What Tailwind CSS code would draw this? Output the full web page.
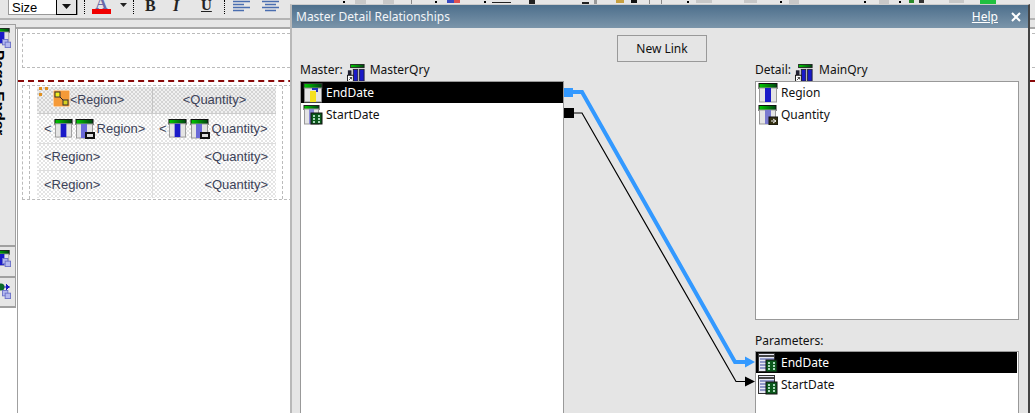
<!DOCTYPE html>
<html lang="en">
<head>
<meta charset="UTF-8">
<title>Master Detail Relationships</title>
<script src="https://cdn.jsdelivr.net/npm/@tailwindcss/browser@4"></script>
</head>
<body class="bg-white">
<!-- shared icons -->
<svg width="0" height="0" class="absolute">
  <defs>
    <linearGradient id="grn" x1="0" y1="0" x2="1" y2="0"><stop offset="0" stop-color="#0c0"/><stop offset="1" stop-color="#041"/></linearGradient>
    <symbol id="field" viewBox="0 0 20 20">
      <rect x="1" y="0.5" width="18" height="5" fill="url(#grn)" stroke="#111"/>
      <rect x="1.5" y="5" width="17" height="14" fill="#e4e4e4" stroke="#999"/>
      <rect x="7" y="5" width="6" height="14" fill="#1a1ac8"/>
    </symbol>
    <symbol id="fieldEnd" viewBox="0 0 20 20">
      <rect x="1" y="0.5" width="18" height="5" fill="url(#grn)" stroke="#333"/>
      <rect x="1.5" y="5" width="17" height="14" fill="#e4e4e4" stroke="#888"/>
      <rect x="7" y="8" width="6" height="11" fill="#f4e020"/>
      <path d="M9 6h5v3" fill="none" stroke="#2233bb" stroke-width="2"/>
    </symbol>
    <symbol id="fieldDate" viewBox="0 0 20 20">
      <rect x="1" y="0.5" width="15" height="4" fill="url(#grn)" stroke="#222"/>
      <rect x="1.5" y="4" width="14" height="15" fill="#e4e4e4" stroke="#999"/>
      <rect x="6" y="4" width="5" height="15" fill="#8a8ad8"/>
      <rect x="8" y="8" width="11" height="11" fill="#0b5a1c" stroke="#111"/>
      <path d="M10 11h2M15 11h2M10 14h2M15 14h2M10 17h2M15 17h2" stroke="#dfe" stroke-width="1.5"/>
    </symbol>
    <symbol id="fieldMeasure" viewBox="0 0 20 20">
      <rect x="1" y="0.5" width="17" height="5" fill="url(#grn)" stroke="#111"/>
      <rect x="1.5" y="5" width="16" height="14" fill="#e4e4e4" stroke="#999"/>
      <rect x="7" y="5" width="6" height="14" fill="#7a7ad0"/>
      <rect x="11" y="12" width="9" height="8" fill="#332f10" stroke="#111"/>
      <path d="M13 16h5M15 14l3 2-3 2" fill="none" stroke="#eee"/>
    </symbol>
    <symbol id="fieldBox" viewBox="0 0 20 20">
      <rect x="1" y="0.5" width="17" height="5" fill="url(#grn)" stroke="#111"/>
      <rect x="1.5" y="5" width="16" height="14" fill="#e4e4e4" stroke="#999"/>
      <rect x="6" y="5" width="6" height="14" fill="#6a6ad8"/>
      <rect x="10" y="13" width="10" height="7" fill="#111"/>
      <rect x="12" y="15" width="6" height="3" fill="#ddd"/>
    </symbol>
    <symbol id="query" viewBox="0 0 20 20">
      <rect x="4" y="0.5" width="15" height="3.5" fill="url(#grn)" stroke="#222"/>
      <rect x="1" y="7" width="4" height="12" fill="#223"/>
      <rect x="7" y="6" width="5" height="13" fill="#1a1ac8" stroke="#223"/>
      <rect x="14" y="6" width="5" height="13" fill="#1a1ac8" stroke="#223"/>
      <rect x="0.5" y="12.5" width="6.5" height="7" fill="#fff" stroke="#111"/>
      <path d="M2 18l3-3M3 15h2v2" fill="none" stroke="#111" stroke-width=".8"/>
    </symbol>
    <symbol id="param" viewBox="0 0 20 20">
      <rect x="0.5" y="0.5" width="16" height="18" fill="#e8e8f4" stroke="#333"/>
      <path d="M1 3h15" stroke="#444" stroke-width="2"/>
      <path d="M2 6h14M2 9h14M2 12h14M2 15h14" stroke="#3a4aa0"/>
      <rect x="8" y="7" width="11" height="12" fill="#0b5a1c" stroke="#111"/>
      <path d="M10 10h2M15 10h2M10 13h2M15 13h2M10 16h2M15 16h2" stroke="#dfe" stroke-width="1.5"/>
    </symbol>
    <symbol id="dbs" viewBox="0 0 10 10">
      <rect x="0.5" y="0.5" width="6" height="6" fill="#b4b8ee" stroke="#6a70c8"/>
      <rect x="3.5" y="3.5" width="6" height="6" fill="#b4b8ee" stroke="#6a70c8"/>
    </symbol>
  </defs>
</svg>

<div class="relative w-[1035px] h-[413px] overflow-hidden flex flex-col bg-white font-['Liberation_Sans',sans-serif]">

  <!-- report designer toolbar -->
  <div class="h-[29px] shrink-0 bg-[#e6e6e6] border-b-2 border-[#a8a8a8] relative">
    <div class="flex items-start h-[20px] border-b-2 border-[#b4b4b4]">
      <div class="ml-[8px] w-[70px] h-[16px] -mt-px bg-white border border-[#999] flex items-center justify-between pl-[3px]">
        <span class="text-[13px] leading-none text-black">Size</span>
        <span class="w-[21px] h-[16px] bg-[#e4e4e4] border border-black border-t-0 flex items-center justify-center">
          <svg width="9" height="5"><path d="M0 0h9L4.500 5z" fill="#111"/></svg>
        </span>
      </div>
      <span class="ml-[6px] w-px h-[14px] border-l border-dotted border-black"></span>
      <div class="ml-[7px] w-[19px] flex flex-col items-center">
        <span class="text-[17px] leading-[10px] -mt-[1px] font-bold font-['Liberation_Serif',serif] text-[#6a6aa8]">A</span>
        <span class="w-[19px] h-[5px] mt-[0px] bg-[#f00000]"></span>
      </div>
      <svg class="ml-[9px] mt-[3px]" width="7" height="4"><path d="M0 0h7L3.500 4z" fill="#222"/></svg>
      <span class="ml-[6px] w-px h-[14px] border-l border-dotted border-black"></span>
      <span class="ml-[11px] w-[14px] text-[16px] leading-[11px] font-bold font-['Liberation_Serif',serif] text-[#222]">B</span>
      <span class="ml-[14px] w-[14px] text-[16px] leading-[11px] font-bold italic font-['Liberation_Serif',serif] text-[#222]">I</span>
      <span class="ml-[14px] w-[14px] text-[15px] leading-[11px] font-bold font-['Liberation_Serif',serif] underline text-[#222]">U</span>
      <span class="ml-[9px] w-px h-[14px] border-l border-dotted border-black"></span>
      <svg class="ml-[8px]" width="17" height="12"><path d="M0 1.500h17M0 4.500h11M0 7.500h17M0 10.500h11" stroke="#4a6eb0" stroke-width="1.500"/></svg>
      <svg class="ml-[12px]" width="17" height="12"><path d="M0 1.500h17M3 4.500h11M0 7.500h17M3 10.500h11" stroke="#4a6eb0" stroke-width="1.500"/></svg>
    </div>
    <!-- icons peeking out above the dialog -->
    <div class="absolute left-[343px] top-0 h-[4px] flex items-start">
      <span class="w-[2px] h-[2px] mt-[1px] bg-black"></span>
      <span class="ml-[10px] w-[11px] h-[4px] bg-[#c8c8c8]"></span>
      <span class="ml-[17px] w-[11px] h-[4px] bg-[#c8c8c8]"></span>
      <span class="ml-[17px] w-px h-[4px] bg-[#888]"></span>
      <span class="ml-[23px] w-[2px] h-[2px] mt-[1px] bg-black"></span>
      <span class="ml-[10px] w-[7px] h-[3px] bg-[#3a4ac0]"></span>
      <span class="w-[6px] h-[3px] bg-[#e05050]"></span>
      <span class="ml-[24px] w-[2px] h-[2px] mt-[1px] bg-black"></span>
      <span class="ml-[6px] w-[19px] h-px mt-[2px] bg-[#222]"></span>
      <span class="ml-[18px] w-[6px] h-[4px] bg-[#222]"></span>
      <span class="ml-[47px] w-[7px] h-[2px] mt-[2px] bg-[#222]"></span>
      <span class="ml-[5px] w-[3px] h-[4px] bg-[#999]"></span>
      <span class="ml-[19px] w-[8px] h-[3px] bg-[#c8a040]"></span>
      <span class="ml-[7px] w-[6px] h-[3px] bg-[#111]"></span>
      <span class="ml-[12px] w-px h-[4px] bg-[#888]"></span>
      <span class="ml-[11px] w-px h-[4px] bg-[#888]"></span>
      <span class="ml-[25px] w-[2px] h-[2px] mt-[1px] bg-black"></span>
      <span class="ml-[7px] w-[16px] h-[3px] bg-[#c8c8c8]"></span>
      <span class="ml-[32px] w-[13px] h-[3px] bg-[#c8c8c8]"></span>
      <span class="ml-[23px] w-[2px] h-[2px] mt-[1px] bg-black"></span>
      <span class="ml-[7px] w-[10px] h-[4px] bg-[#c8c8c8]"></span>
      <span class="ml-[65px] w-[2px] h-[2px] mt-[1px] bg-black"></span>
      <span class="ml-[13px] w-[10px] h-[4px] bg-[#c8c8c8]"></span>
      <span class="ml-[10px] w-[2px] h-[2px] mt-[1px] bg-black"></span>
      <span class="ml-[8px] w-[5px] h-[3px] bg-[#2a8a2a]"></span>
      <span class="ml-[5px] w-[5px] h-[3px] bg-[#333]"></span>
      <span class="ml-[25px] w-[15px] h-[3px] bg-[#c8c8c8]"></span>
      <span class="ml-[16px] w-[16px] h-[4px] bg-[#20c040]"></span>
    </div>
  </div>

  <!-- designer surface -->
  <div class="flex-1 flex min-h-0">
    <div class="w-[16px] shrink-0 -mt-[5px] relative flex flex-col overflow-hidden">
      <div class="h-[221px] shrink-0 relative overflow-hidden bg-[#e6e6e6] border-t border-r border-[#a0a0a0]">
        <svg class="absolute left-[-6px] top-[3px]" width="16" height="16" viewBox="0 0 20 20"><use href="#field"/></svg>
        <svg class="absolute left-[2px] top-[14px]" width="9" height="9"><use href="#dbs"/></svg>
        <span class="absolute left-[-8px] top-[25px] [writing-mode:vertical-rl] text-[15.500px] leading-[14px] font-bold text-black">Page Ender</span>
      </div>
      <div class="h-[31px] shrink-0 bg-[#e6e6e6] border-t-2 border-r border-[#a0a0a0] relative overflow-hidden">
        <svg class="absolute left-[-6px] top-[3px]" width="16" height="16" viewBox="0 0 20 20"><use href="#field"/></svg>
        <svg class="absolute left-[2px] top-[11px]" width="9" height="9"><use href="#dbs"/></svg>
      </div>
      <div class="h-[32px] shrink-0 bg-[#e6e6e6] border-t-2 border-b-2 border-r border-[#a0a0a0] relative overflow-hidden">
        <svg class="absolute left-0 top-[3px]" width="10" height="12"><circle cx="1" cy="6" r="3.500" fill="#0a6a2a"/><path d="M4 6h6M6 3l3 3-3 3" fill="#1a1ac0" stroke="#1a1ac0"/></svg>
        <svg class="absolute left-[2px] top-[12px]" width="9" height="9"><use href="#dbs"/></svg>
      </div>
    </div>

    <div class="flex-1 flex flex-col ml-px border-l border-[#a0a0a0] pl-[4px] pt-[4px]">
      <div class="h-[35px] shrink-0 border border-dashed border-[#bbb] border-r-0"></div>
      <div class="h-[14px] shrink-0 border-b-2 border-dashed border-[#8a0a0a] -ml-[4px]"></div>
      <div class="mt-[3px] h-[115px] shrink-0 w-[270px] border border-dashed border-[#bbb] border-r-0 px-[6px]">
        <div class="w-[254px] h-full border-x border-dashed border-[#bbb] pl-[7px] pt-px">
          <div class="w-[239px] text-[13px] text-[#3c4258]">
            <div class="h-[27px] flex bg-[conic-gradient(#d4d4d4_25%,#f0f0f0_0_50%,#d4d4d4_0_75%,#f0f0f0_0)] bg-[length:4px_4px] border-b border-[#ccc]">
              <div class="w-[116px] border-r border-[#c4c4c4] flex items-center pl-[16px] relative text-[12.500px]">
                <span class="absolute left-[2px] top-[0px] grid grid-cols-2 gap-[3px]"><i class="w-[3px] h-[3px] bg-[#e09020]"></i><i class="w-[3px] h-[3px] bg-[#e09020]"></i><i class="w-[3px] h-[3px] bg-[#e09020]"></i></span>
                <svg width="17" height="17" class="shrink-0 mb-[4px]"><rect width="17" height="17" fill="#f59a38" stroke="#fff"/><path d="M4 4l9 9" stroke="#222"/><rect x="2" y="2" width="5" height="5" fill="#f2ee20" stroke="#333"/><rect x="10" y="10" width="5" height="5" fill="#d8d020" stroke="#333"/></svg>
                <span>&lt;Region&gt;</span>
              </div>
              <div class="flex-1 flex items-center justify-center">&lt;Quantity&gt;</div>
            </div>
            <div class="h-[30px] flex bg-[conic-gradient(#e4e4e4_25%,#ffffff_0_50%,#e4e4e4_0_75%,#ffffff_0)] bg-[length:4px_4px] border-b border-[#ddd]">
              <div class="w-[116px] border-r border-[#ddd] flex items-center pl-[7px]">
                <span>&lt;</span>
                <svg width="19" height="19" class="ml-[2px] shrink-0"><use href="#field"/></svg>
                <svg width="20" height="20" class="ml-[2px] shrink-0"><use href="#fieldBox"/></svg>
                <span class="ml-[2px]">Region&gt;</span>
              </div>
              <div class="flex-1 flex items-center pl-[6px]">
                <span>&lt;</span>
                <svg width="19" height="19" class="ml-[1px] shrink-0"><use href="#field"/></svg>
                <svg width="20" height="20" class="ml-[3px] shrink-0"><use href="#fieldBox"/></svg>
                <span class="ml-[2px]">Quantity&gt;</span>
              </div>
            </div>
            <div class="h-[27px] flex bg-[conic-gradient(#e4e4e4_25%,#ffffff_0_50%,#e4e4e4_0_75%,#ffffff_0)] bg-[length:4px_4px] border-b border-[#ddd]">
              <div class="w-[116px] border-r border-[#ddd] flex items-center pl-[7px]">&lt;Region&gt;</div>
              <div class="flex-1 flex items-center justify-end pr-[8px]">&lt;Quantity&gt;</div>
            </div>
            <div class="h-[27px] flex bg-[conic-gradient(#e4e4e4_25%,#ffffff_0_50%,#e4e4e4_0_75%,#ffffff_0)] bg-[length:4px_4px]">
              <div class="w-[116px] border-r border-[#ddd] flex items-center pl-[7px]">&lt;Region&gt;</div>
              <div class="flex-1 flex items-center justify-end pr-[8px]">&lt;Quantity&gt;</div>
            </div>
          </div>
        </div>
      </div>
    </div>
  </div>

  <!-- modal dialog -->
  <div class="absolute left-[290px] top-[4px] w-[740px] h-[409px] bg-[#e5e5e5] border-l-2 border-l-[#b8b8b8] border-r-2 border-r-[#444] border-t border-t-[#ccc] flex flex-col font-['Noto_Sans',sans-serif] text-[12px] text-[#111]">
    <div class="h-[23px] shrink-0 bg-gradient-to-b from-[#4d6f8c] to-[#7b95aa] flex items-center justify-between pl-[4px] pr-[7px] text-white">
      <span class="text-[#f2f5f8]">Master Detail Relationships</span>
      <div class="flex items-center gap-[13px]">
        <span class="underline">Help</span>
        <svg width="10" height="10"><path d="M1 1l8 8M9 1L1 9" stroke="#fff" stroke-width="2"/></svg>
      </div>
    </div>
    <div class="pl-[325px] pt-[7px] shrink-0">
      <button class="w-[90px] h-[27px] border border-[#999] bg-[#e5e5e5] flex items-center justify-center">New Link</button>
    </div>
    <div class="flex-1 min-h-0 flex pl-[8px] gap-[191px]">
      <div class="w-[264px] flex flex-col">
        <div class="h-[19px] pb-[4px] flex items-center">Master:
          <svg width="18" height="18" class="ml-[4px] mr-[5px] mt-[6px]"><use href="#query"/></svg>MasterQry</div>
        <div class="flex-1 bg-white border border-[#999] border-b-0">
          <div class="h-[21px] bg-black text-white flex items-center pl-[2px]">
            <svg width="20" height="20" class="mr-[3px]"><use href="#fieldEnd"/></svg>EndDate</div>
          <div class="h-[24px] flex items-center pl-[2px]">
            <svg width="20" height="20" class="mr-[3px]"><use href="#fieldDate"/></svg>StartDate</div>
        </div>
      </div>
      <div class="w-[264px] flex flex-col">
        <div class="h-[19px] pb-[4px] flex items-center">Detail:
          <svg width="18" height="18" class="ml-[4px] mr-[6px] mt-[6px]"><use href="#query"/></svg>MainQry</div>
        <div class="h-[239px] shrink-0 bg-white border border-[#999]">
          <div class="h-[21px] flex items-center pl-[2px]">
            <svg width="20" height="20" class="mr-[3px]"><use href="#field"/></svg>Region</div>
          <div class="h-[24px] flex items-center pl-[2px]">
            <svg width="20" height="20" class="mr-[3px]"><use href="#fieldMeasure"/></svg>Quantity</div>
        </div>
        <div class="h-[31px] shrink-0 flex items-end pb-[1px]">Parameters:</div>
        <div class="flex-1 bg-white border border-[#999] border-b-0">
          <div class="h-[21px] mr-[1px] bg-black text-white flex items-center pl-[2px]">
            <svg width="20" height="20" class="mr-[3px]"><use href="#param"/></svg>EndDate</div>
          <div class="h-[24px] flex items-center pl-[2px]">
            <svg width="20" height="20" class="mr-[3px]"><use href="#param"/></svg>StartDate</div>
        </div>
      </div>
    </div>
  </div>

  <!-- link lines between master and parameter fields -->
  <svg class="absolute inset-0 pointer-events-none" width="1035" height="413">
    <rect x="564" y="88" width="9" height="9" fill="#3399ff"/>
    <polyline points="572,92 582,92 735,362 746,362" fill="none" stroke="#3399ff" stroke-width="4"/>
    <path d="M745 356.500L755 362L745 367.500z" fill="#3399ff"/>
    <rect x="564" y="108" width="10" height="10" fill="#000"/>
    <polyline points="573,113 582,113 736,381.500 746,381.500" fill="none" stroke="#000" stroke-width="1.200"/>
    <path d="M745 376.500L755 381.500L745 386.500z" fill="#000"/>
  </svg>
</div>
</body>
</html>
